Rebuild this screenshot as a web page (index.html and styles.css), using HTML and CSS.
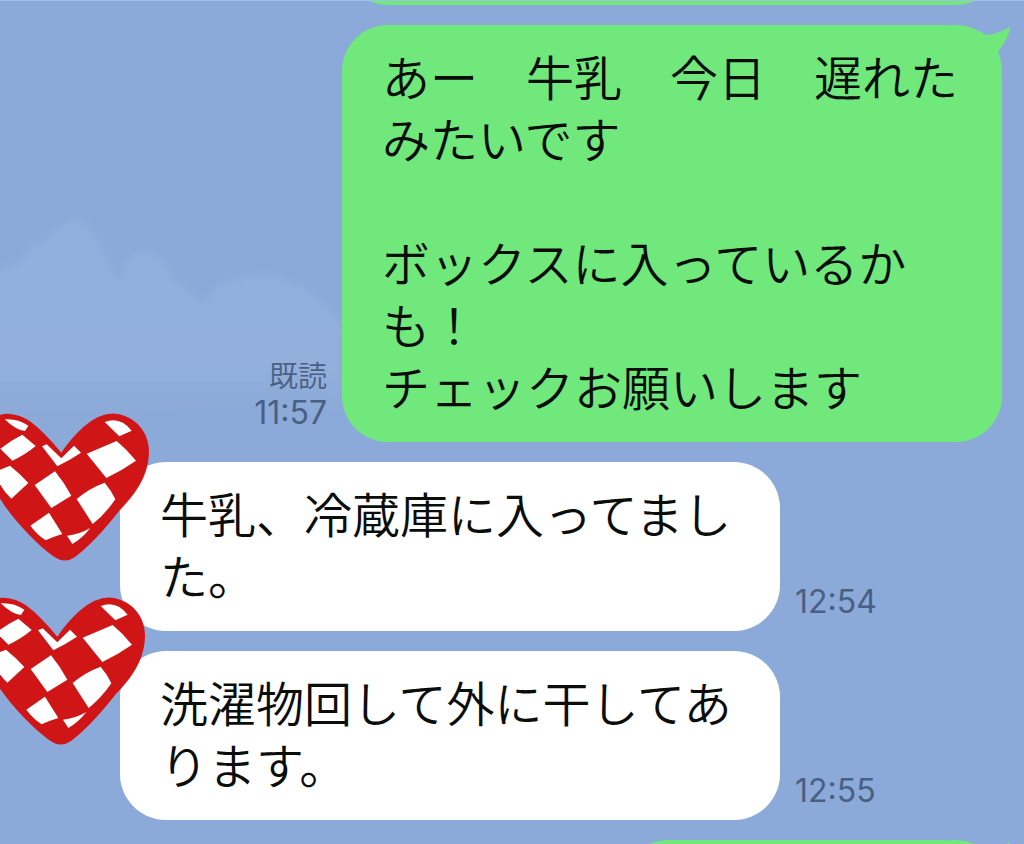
FILE: index.html
```html
<!DOCTYPE html>
<html lang="ja">
<head>
<meta charset="utf-8">
<meta name="viewport" content="width=device-width, initial-scale=1">
<title>トーク</title>
<link rel="stylesheet" href="styles.css">
</head>
<body>
<main class="chat">
  <svg class="clouds" viewBox="0 0 360 240" aria-hidden="true">
    <defs>
      <linearGradient id="haze" x1="0" y1="0" x2="0" y2="1">
        <stop offset="0" stop-color="#91b1dc"/>
        <stop offset="0.7" stop-color="#92b0db"/>
        <stop offset="1" stop-color="#8da9d8" stop-opacity="0"/>
      </linearGradient>
    </defs>
    <path fill="url(#haze)" d="M-20 72 Q12 66 22 62 Q28 46 42 43 Q54 26 74 20 Q90 20 94 38 Q102 50 108 66 Q118 86 126 72 Q124 52 146 52 Q168 58 174 80 Q186 86 204 104 Q216 84 236 78 Q266 70 292 82 Q324 96 342 126 L342 215 Q220 205 170 212 L-20 230Z"/>
  </svg>

  <div class="row row-own row-past"><div class="bubble bubble-own bubble-cut"></div></div>

  <article class="row row-own">
    <div class="meta meta-own"><span class="read">既読</span><time>11:57</time></div>
    <div class="bubble bubble-own">
      <svg class="tail" viewBox="0 0 60 60" aria-hidden="true"><path d="M0 1 H8 Q22 2 36 11 Q48 10 60 3 Q60 12 48 28 Q52 36 52 52 L0 52Z"/></svg>
      <p class="text">あー　牛乳　今日　遅れた<br>みたいです<br><br>ボックスに入っているか<br>も！<br>チェックお願いします</p>
    </div>
  </article>

  <article class="row">
    <svg class="heart" viewBox="-60 35 510 450" aria-hidden="true">
      <defs>
        <g id="checked-heart">
          <path fill="#d01517" d="M184 157 Q210 116 251 79 Q302 36 347 40 C405 47 446 93 447 151 C447 226 407 280 359 330 Q285 425 224 471 Q193 492 160 468 C105 427 38 356 0 295 C-35 236 -60 182 -54 125 C-47 72 -12 39 22 40 Q61 41 94 66 Q130 93 184 157Z"/>
          <g fill="#fff">
            <path d="M14 57 Q52 54 85 76 L75 92 Q48 90 14 57Z"/>
            <path d="M1 145 Q34 119 67 103 L107 137 Q75 164 37 181Z"/>
            <path d="M-14 214 L30 196 Q58 218 85 248 L34 295 Q-4 260 -14 214Z"/>
            <path d="M126 138 L140 132 Q162 153 184 174 L222 136 L243 157 Q208 180 172 198Z"/>
            <path d="M314 65 Q360 47 395 91 L358 108Z"/>
            <path d="M260 160 L350 122 Q380 147 408 181 Q365 211 319 233Z"/>
            <path d="M104 254 L165 213 Q192 246 214 286 L154 323Z"/>
            <path d="M230 296 Q269 263 314 247 Q333 269 346 297 Q316 341 278 371Z"/>
            <path d="M91 376 L147 337 L187 401 Q160 409 137 420 Q111 403 91 376Z"/>
            <path d="M201 406 Q236 403 271 383 Q247 414 217 431Z"/>
          </g>
        </g>
      </defs>
      <use href="#checked-heart"/>
    </svg>
    <div class="bubble"><p class="text">牛乳、冷蔵庫に入ってまし<br>た。</p></div>
    <div class="meta"><time>12:54</time></div>
  </article>

  <article class="row">
    <svg class="heart heart-low" viewBox="-60 35 510 450" aria-hidden="true"><use href="#checked-heart"/></svg>
    <div class="bubble"><p class="text">洗濯物回して外に干してあ<br>ります。</p></div>
    <div class="meta"><time>12:55</time></div>
  </article>

  <div class="row row-own">
    <div class="bubble bubble-own bubble-next">
      <svg class="tail" viewBox="0 0 60 60" aria-hidden="true"><path d="M0 1 H8 Q22 2 36 11 Q48 10 60 3 Q60 12 48 28 Q52 36 52 52 L0 52Z"/></svg>
    </div>
  </div>
</main>
</body>
</html>
```
FILE: styles.css
```css
* {
  box-sizing: border-box;
}

body {
  margin: 0;
  background: #8caad9;
  color: #0b0d0b;
  font-family: "Liberation Sans", "Noto Sans CJK JP", sans-serif;
}

.chat {
  position: relative;
  display: flex;
  flex-direction: column;
  gap: 20px;
  height: 100vh;
  overflow: hidden;
  border-top: 1px solid #a3bfe9;
}

.clouds {
  position: absolute;
  top: 200px;
  left: 0;
  width: 360px;
  overflow: visible;
  filter: blur(4px);
}

.row {
  position: relative;
  display: flex;
  flex-shrink: 0;
  align-items: flex-end;
  gap: 15px;
  padding-left: 120px;
}

.row-own {
  justify-content: flex-end;
  padding: 0 22px 0 0;
}

.row-past {
  height: 4px;
  overflow: hidden;
}

.bubble {
  position: relative;
  width: 660px;
  padding: 24px 40px 21px;
  border-radius: 46px;
  background: #fff;
}

.bubble-own {
  background: #70e87b;
}

.bubble-cut {
  height: 120px;
}

.bubble-next {
  width: 380px;
  height: 120px;
}

.tail {
  position: absolute;
  top: -1px;
  right: -8px;
  width: 60px;
  fill: #70e87b;
}

.bubble-own:has(.tail) {
  border-top-right-radius: 60px;
}

.text {
  position: relative;
  margin: 0;
  font-size: 48px;
  font-weight: 350;
  line-height: 62px;
  white-space: nowrap;
}

.meta {
  display: flex;
  flex-direction: column;
  padding-bottom: 11px;
  color: #4a6083;
  font-family: Inter, "Noto Sans CJK JP", sans-serif;
  font-size: 32px;
  line-height: 36px;
}

.meta-own {
  align-items: flex-end;
}

.read {
  font-size: 29px;
  font-weight: 350;
}

.heart {
  position: absolute;
  top: -50px;
  left: -20px;
  z-index: 1;
  width: 170px;
}

.heart-low {
  top: -55px;
  left: -24px;
}
```
